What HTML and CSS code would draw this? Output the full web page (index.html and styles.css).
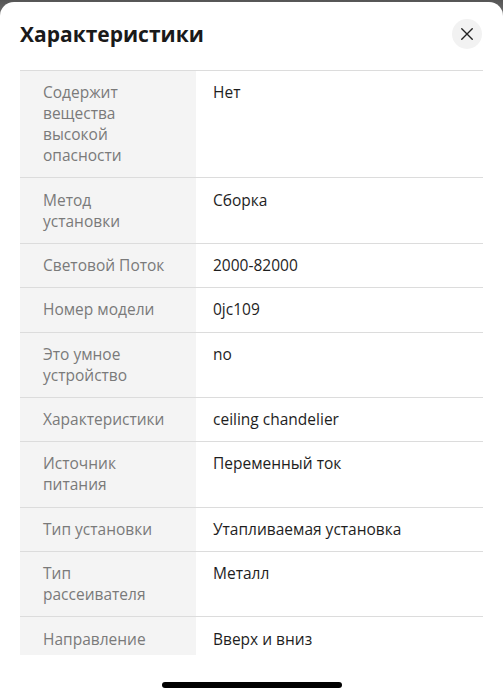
FILE: index.html
```html
<!DOCTYPE html>
<html lang="ru">
<head>
<meta charset="utf-8">
<link rel="stylesheet" href="styles.css">
</head>
<body>
<div class="sheet">
  <header class="head">
    <h1 class="title">Характеристики</h1>
    <button class="close" aria-label="Закрыть">
      <svg width="16" height="16" viewBox="0 0 16 16"><path d="M2 2 L14 14 M14 2 L2 14" stroke="#222" stroke-width="1.6" stroke-linecap="round" fill="none"/></svg>
    </button>
  </header>
  <div class="scroll">
    <div class="specs">
      <div class="row"><div class="k">Содержит вещества высокой опасности</div><div class="v">Нет</div></div>
      <div class="row"><div class="k">Метод установки</div><div class="v">Сборка</div></div>
      <div class="row"><div class="k">Световой Поток</div><div class="v">2000-82000</div></div>
      <div class="row"><div class="k">Номер модели</div><div class="v">0jc109</div></div>
      <div class="row"><div class="k">Это умное устройство</div><div class="v">no</div></div>
      <div class="row"><div class="k">Характеристики</div><div class="v">ceiling chandelier</div></div>
      <div class="row"><div class="k">Источник питания</div><div class="v">Переменный ток</div></div>
      <div class="row"><div class="k">Тип установки</div><div class="v">Утапливаемая установка</div></div>
      <div class="row"><div class="k">Тип рассеивателя</div><div class="v">Металл</div></div>
      <div class="row"><div class="k">Направление</div><div class="v">Вверх и вниз</div></div>
    </div>
  </div>
  <div class="home"><span class="bar"></span></div>
</div>
</body>
</html>
```

FILE: styles.css
```css
html, body {
  margin: 0;
  height: 100%;
}
body {
  background: linear-gradient(#555, #8a8a8a 30px);
  font-family: "Open Sans", "Noto Sans", sans-serif;
  overflow: hidden;
}
.sheet {
  margin-top: 2px;
  height: calc(100% - 2px);
  background: #fff;
  border-radius: 14px 14px 0 0;
  display: flex;
  flex-direction: column;
  overflow: hidden;
}
.head {
  display: flex;
  align-items: center;
  justify-content: space-between;
  padding: 0 21px 4px 20px;
  height: 68px;
  box-sizing: border-box;
  flex: none;
}
.title {
  margin: 0;
  font-size: 21px;
  font-weight: 700;
  color: #1a1a1a;
}
.close {
  width: 30px;
  height: 30px;
  border-radius: 50%;
  border: none;
  background: #f2f2f2;
  display: flex;
  align-items: center;
  justify-content: center;
  padding: 0;
}
.close svg { width: 14px; height: 14px; }
.scroll {
  flex: 1;
  margin: 0 20px;
  overflow: hidden;
  border-top: 1px solid #dcdcdc;
}
.row {
  display: grid;
  grid-template-columns: 176px 1fr;
  border-bottom: 1px solid #dcdcdc;
  font-size: 15.5px;
  line-height: 21px;
}
.k {
  background: #f4f4f4;
  color: #7a7a7a;
  padding: 11.2px 24px 11.2px 23px;
}
.v {
  color: #1e1e1e;
  padding: 11.2px 10px 11.2px 17px;
}
.home {
  flex: none;
  height: 44px;
  display: flex;
  justify-content: center;
  align-items: flex-start;
  padding-top: 27px;
  box-sizing: border-box;
}
.bar {
  width: 180px;
  height: 6px;
  border-radius: 3px;
  background: #000;
}
```
